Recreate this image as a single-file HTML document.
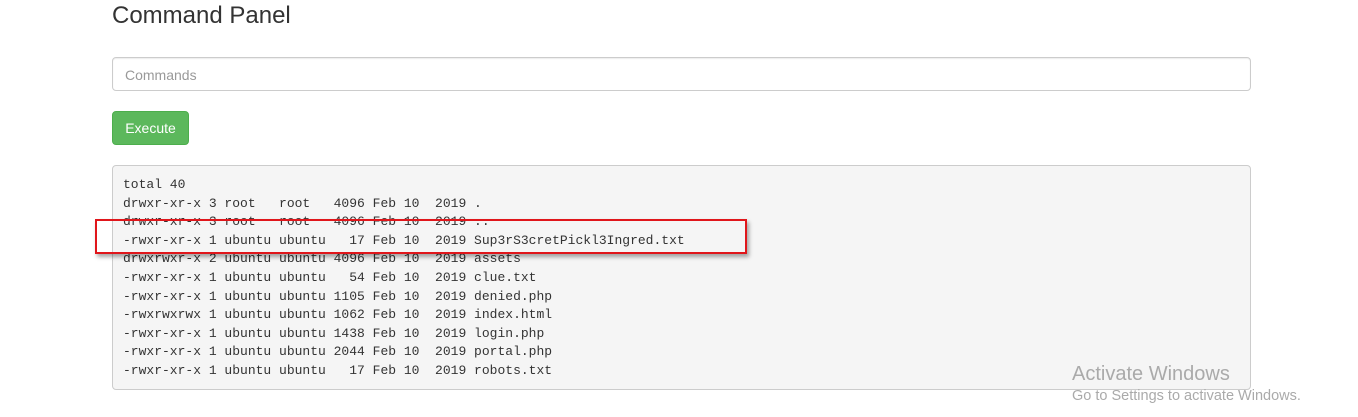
<!DOCTYPE html>
<html><head><style>
body{margin:0;width:1358px;height:417px;background:#fff;font-family:"Liberation Sans",sans-serif;position:relative;overflow:hidden;color:#333}
h1{position:absolute;left:112px;top:1px;margin:0;font-size:24px;font-weight:500;line-height:30px;color:#333}
.inp{position:absolute;left:112px;top:57px;width:1137px;height:32px;border:1px solid #ccc;border-radius:4px;box-shadow:inset 0 1px 1px rgba(0,0,0,.075)}
.inp span{position:absolute;left:12px;top:9px;font-size:14px;color:#999}
.btn{position:absolute;left:112px;top:111px;width:75px;height:32px;background:#5cb85c;border:1px solid #4cae4c;border-radius:4px;color:#fff;font-size:14px;line-height:33px;text-align:center}
pre{position:absolute;left:112px;top:165px;width:1117px;height:204px;margin:0;padding:10px 10px 9px 10px;background:#f5f5f5;border:1px solid #ccc;border-radius:4px;font-family:"Liberation Mono",monospace;font-size:13px;line-height:18.6px;color:#333}
.red{position:absolute;left:95px;top:219px;width:648px;height:31px;border:2px solid #e0161b;box-shadow:2px 3px 4px rgba(0,0,0,.35)}
.aw{position:absolute;left:1072px;top:363px;font-size:20px;color:#aaa;font-family:"Liberation Sans",sans-serif}
.aw2{position:absolute;left:1072px;top:388px;font-size:14.5px;color:#aaa}
</style></head><body>
<h1>Command Panel</h1>
<div class="inp"><span>Commands</span></div>
<div class="btn">Execute</div>
<pre>total 40
drwxr-xr-x 3 root   root   4096 Feb 10  2019 .
drwxr-xr-x 3 root   root   4096 Feb 10  2019 ..
-rwxr-xr-x 1 ubuntu ubuntu   17 Feb 10  2019 Sup3rS3cretPickl3Ingred.txt
drwxrwxr-x 2 ubuntu ubuntu 4096 Feb 10  2019 assets
-rwxr-xr-x 1 ubuntu ubuntu   54 Feb 10  2019 clue.txt
-rwxr-xr-x 1 ubuntu ubuntu 1105 Feb 10  2019 denied.php
-rwxrwxrwx 1 ubuntu ubuntu 1062 Feb 10  2019 index.html
-rwxr-xr-x 1 ubuntu ubuntu 1438 Feb 10  2019 login.php
-rwxr-xr-x 1 ubuntu ubuntu 2044 Feb 10  2019 portal.php
-rwxr-xr-x 1 ubuntu ubuntu   17 Feb 10  2019 robots.txt</pre>
<div class="red"></div>
<div class="aw">Activate Windows</div>
<div class="aw2">Go to Settings to activate Windows.</div>
</body></html>
